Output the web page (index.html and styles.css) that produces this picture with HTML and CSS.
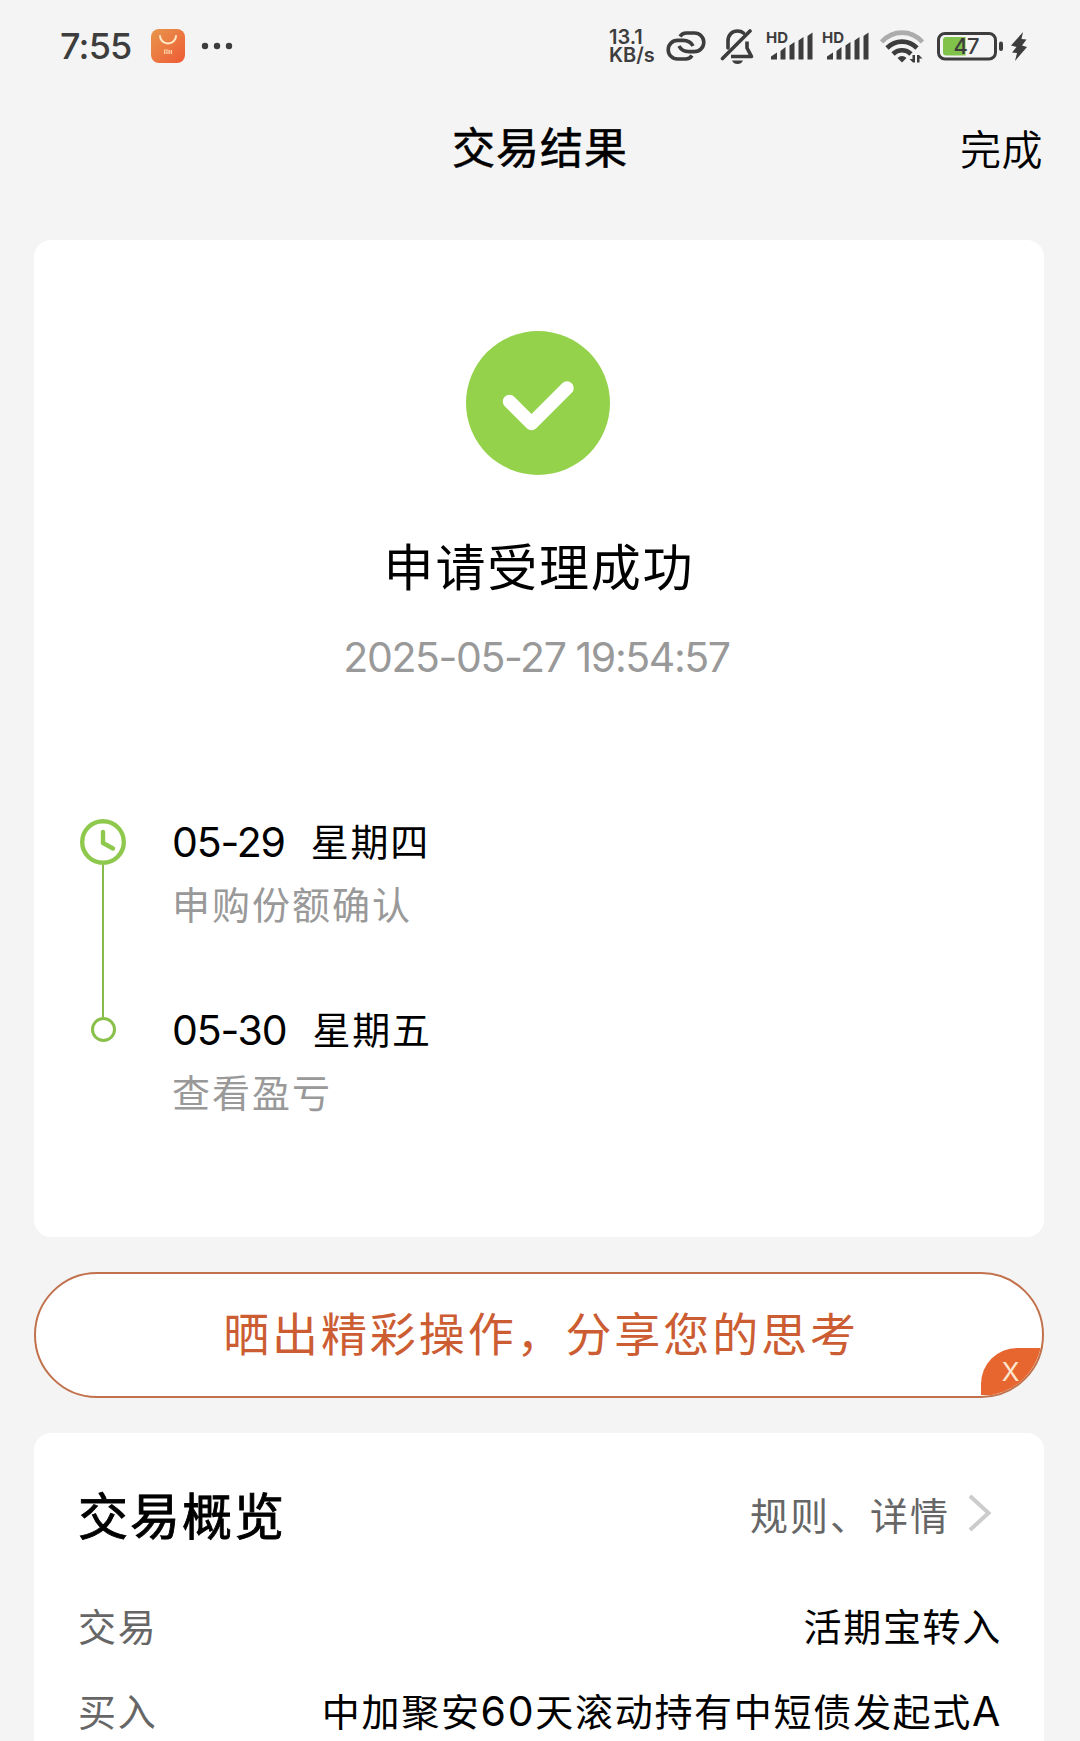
FILE: index.html
```html
<!DOCTYPE html>
<html lang="zh-CN">
<head>
  <meta charset="UTF-8" />
  <title>交易结果</title>
  <link rel="stylesheet" href="styles.css">
</head>
<body>
  <div class="statusbar">
    <span class="time">7:55</span>
    <svg class="app" width="34" height="34" viewBox="0 0 34 34">
      <defs>
        <linearGradient id="mi" x1="0" y1="0" x2="1" y2="1">
          <stop offset="0" stop-color="#e8974c" />
          <stop offset="1" stop-color="#ee5a35" />
        </linearGradient>
      </defs>
      <rect width="34" height="34" rx="8" fill="url(#mi)" />
      <path d="M9 7a8 7.5 0 0 0 16 0" fill="none" stroke="#ffe9c8" stroke-width="2" stroke-linecap="round" />
      <path d="M13.500 25v-4h3.500v4M15.300 25v-2.400M18.700 25v-4M20.500 25v-4" fill="none" stroke="#ffd0a8" stroke-width="1.100" />
    </svg>
    <svg class="dots" width="32" height="8" viewBox="0 0 32 8">
      <circle cx="4" cy="4" r="3.2" /><circle cx="16" cy="4" r="3.2" /><circle cx="28" cy="4" r="3.2" />
    </svg>
    <div class="speed"><span>13.1</span><span>KB/s</span></div>
    <svg class="link" width="40" height="30" viewBox="0 0 40 30">
      <g fill="none" stroke="#3d3d3d" stroke-width="3.600">
        <path d="M14 5.500C15.500 3 18 2 20.500 2H28.500a9.300 9.300 0 0 1 0 18.600H23c-4.500 0-8-1.600-10-5.600" />
        <path d="M26 24.500C24.500 27 22 28 19.500 28H11.500a9.300 9.300 0 0 1 0-18.600H17c4.500 0 8 1.600 10 5.600" />
      </g>
    </svg>
    <svg class="bell" width="35" height="37" viewBox="0 0 35 37">
      <g fill="none" stroke="#3d3d3d" stroke-width="3.600" stroke-linecap="round" stroke-linejoin="round">
        <path d="M2.500 30.500L30 3" />
        <path d="M8 20V13C8 7 12 3 17.500 3 20 3 22 3.600 23.500 5" />
        <path d="M27 13.500V20l4.500 8.500H11" stroke-linecap="butt" />
      </g>
      <path d="M12 32.500h11c-1 2.400-3 3.500-5.500 3.500S13 34.900 12 32.500z" fill="#3d3d3d" />
    </svg>
    <svg class="signal" width="48" height="36" viewBox="0 -6 48 36">
      <text x="0" y="11.500">HD</text>
      <path d="M5 28.500v-3l6-4v7zM14.500 28.500V20l5-4v12.500zM23.500 28.500v-14l5-3.500v17.500zM32.500 28.500V9.500l5-3.500v22.500zM41.500 28.500V5l5-3.500v27z" />
    </svg>
    <svg class="signal" width="48" height="36" viewBox="0 -6 48 36">
      <text x="0" y="11.500">HD</text>
      <path d="M5 28.500v-3l6-4v7zM14.500 28.500V20l5-4v12.500zM23.500 28.500v-14l5-3.500v17.500zM32.500 28.500V9.500l5-3.500v22.500zM41.500 28.500V5l5-3.500v27z" />
    </svg>
    <svg class="wifi" width="44" height="33" viewBox="0 0 44 33">
      <g fill="none" stroke="#3d3d3d" stroke-width="4.600">
        <path d="M1.500 12C13-.5 31-.5 42.500 12" stroke="#acacac" />
        <path d="M7 18c8.500-8.500 21.500-8.500 30 0" />
        <path d="M13 24c5-5 13-5 18 0" />
      </g>
      <path d="M17.500 28c2.500-2.800 6.500-2.800 9 0L22 32.500z" />
      <path d="M35 25v7.500h-2L29.500 29h3V25zM37 32.500V25h2l3.500 3.500h-3v4z" />
    </svg>
    <svg class="battery" width="66" height="30" viewBox="0 0 66 30">
      <rect x="1.500" y="2.500" width="57" height="25.500" rx="6.500" fill="none" stroke="#3d3d3d" stroke-width="3" />
      <path d="M9 6H28.500V24.500H9a3 3 0 0 1-3-3V9a3 3 0 0 1 3-3z" fill="#80c24a" />
      <text x="29" y="23.200" text-anchor="middle">47</text>
      <rect x="62" y="10.500" width="4" height="9.500" rx="2" />
    </svg>
    <svg class="bolt" width="18" height="30" viewBox="0 0 18 30">
      <path d="M13 1L1 14.500l5.500 1.500-4.500 5.500 5 .5L5 30 17 16l-5-1.500 4.500-6-5-.5z" />
    </svg>
  </div>

  <div class="navbar">
    <div class="nav-title">交易结果</div>
    <a class="nav-done">完成</a>
  </div>

  <div class="card result">
    <svg class="check" width="144" height="144" viewBox="0 0 144 144">
      <circle cx="72" cy="72" r="72" fill="#93d24a" />
      <path d="M43.500 70.500L65.500 92.500 101 57" fill="none" stroke="#fff" stroke-width="13.500" stroke-linecap="round" stroke-linejoin="round" />
    </svg>
    <h1>申请受理成功</h1>
    <div class="datetime">2025-05-27 19:54:57</div>

    <div class="timeline">
      <div class="rail">
        <svg width="46" height="46" viewBox="0 0 46 46">
          <circle cx="23" cy="23" r="20.800" />
          <path d="M23 13V24l10 5.500" stroke-linecap="round" stroke-linejoin="round" />
        </svg>
        <div class="line"></div>
        <div class="dot"></div>
      </div>
      <div class="steps">
        <div class="step">
          <div class="day"><span class="num">05-29</span><span class="week">星期四</span></div>
          <div class="desc">申购份额确认</div>
        </div>
        <div class="step">
          <div class="day"><span class="num">05-30</span><span class="week">星期五</span></div>
          <div class="desc">查看盈亏</div>
        </div>
      </div>
    </div>
  </div>

  <div class="share">
    <span>晒出精彩操作，分享您的思考</span>
    <div class="close">X</div>
  </div>

  <div class="card overview">
    <div class="overview-head">
      <h2>交易概览</h2>
      <a class="more">规则、详情
        <svg width="24" height="40" viewBox="0 0 24 40"><path d="M2 3L20.500 20 2 37" /></svg>
      </a>
    </div>
    <div class="row"><span class="label">交易</span><span class="value">活期宝转入</span></div>
    <div class="row"><span class="label">买入</span><span class="value">中加聚安<b>60</b>天滚动持有中短债发起式<b>A</b></span></div>
  </div>
</body>
</html>
```

FILE: styles.css
```css
* { box-sizing: border-box; }
body { margin: 0; height: 1741px; overflow: hidden; background: #f4f4f4; color: #000; font-family: "Noto Sans CJK SC", sans-serif; }
h1, h2 { margin: 0; }
svg { display: block; flex: none; }

/* status bar */
.statusbar { display: flex; align-items: center; height: 92px; padding-left: 60px; font-family: Inter, sans-serif; color: #3d3d3d; fill: #3d3d3d; }
.time { width: 91px; font-size: 36px; font-weight: 500; letter-spacing: -0.8px; }
.dots { margin-left: 16px; }
.speed { display: flex; flex-direction: column; width: 57px; margin-left: 376px; font-size: 20px; font-weight: 600; line-height: 18px; }
.bell { margin-left: 14px; }
.signal { margin-left: 11px; padding-bottom: 6px; height: 42px; }
.signal + .signal { margin-left: 8px; }
.signal text { font-size: 15px; font-weight: 700; }
.wifi { margin-left: 10px; }
.battery { margin-left: 13px; }
.battery text { font-size: 22px; font-weight: 500; letter-spacing: -1px; }
.bolt { margin-left: 7px; }

/* title */
.navbar { display: grid; grid-template-columns: 1fr auto 1fr; align-items: center; height: 106px; padding: 0 37px; }
.nav-title { grid-column: 2; font-size: 43px; letter-spacing: 1px; -webkit-text-stroke: 0.6px #000; }
.nav-done { justify-self: end; padding-top: 3px; font-size: 41px; font-weight: 350; letter-spacing: 0.5px; }

.card { width: 1010px; margin: 0 auto 0 34px; border-radius: 17px; background: #fff; }

/* result */
.result { display: flex; flex-direction: column; align-items: center; height: 997px; margin-top: 42px; padding-top: 91px; }
.check { margin-right: 2px; }
.result h1 { height: 70px; margin-top: 54px; font-size: 50px; font-weight: 400; letter-spacing: 1.8px; line-height: 70px; }
.datetime { height: 50px; margin-top: 33px; padding-right: 5px; color: #999; font: 400 41px/50px Inter, sans-serif; letter-spacing: -1.4px; }

.timeline { display: flex; width: 100%; margin-top: 137px; padding-left: 46px; }
.rail { display: flex; flex-direction: column; align-items: center; width: 46px; }
.rail svg { fill: none; stroke: #8ec94e; stroke-width: 4.400; }
.line { width: 2px; height: 152px; background: #88bb4e; }
.dot { width: 25px; height: 25px; border: 3px solid #88c04a; border-radius: 50%; }
.steps { margin-left: 46px; }
.step { height: 188px; }
.day { display: flex; align-items: center; gap: 26px; height: 46px; }
.num { font: 400 41px/46px Inter, sans-serif; letter-spacing: -1.2px; }
.week { height: 50px; font-size: 38px; letter-spacing: 1.8px; line-height: 46px; }
.desc { height: 46px; margin-top: 15px; color: #999; font-size: 38px; letter-spacing: 2px; line-height: 46px; }

/* share */
.share { position: relative; display: flex; align-items: center; justify-content: center; width: 1010px; height: 126px; margin: 35px 0 35px 34px; padding: 0 0 8px 4px; border: 2px solid #c1714b; border-radius: 63px; background: #fff; color: #cc5d33; font-size: 46px; letter-spacing: 2.900px; overflow: hidden; }
.close { position: absolute; right: 0; bottom: 1px; width: 61px; height: 47px; padding-right: 2px; border-radius: 36px 0 0 0; background: #e76630; color: #fde6cf; font: 400 26px/48px Inter, sans-serif; letter-spacing: 0; text-align: center; }

/* overview */
.overview { height: 340px; padding: 40px 42px 0 44px; }
.overview-head { display: flex; align-items: center; justify-content: space-between; height: 80px; margin-bottom: 29px; }
.overview h2 { font-size: 50px; font-weight: 400; letter-spacing: 2px; -webkit-text-stroke: 0.9px #000; }
.more { display: flex; align-items: center; gap: 18px; padding-right: 10px; color: #666; font-size: 38px; letter-spacing: 2px; }
.more svg { fill: none; stroke: #ccc; stroke-width: 4; }
.row { display: flex; align-items: center; justify-content: space-between; height: 85px; font-size: 38px; letter-spacing: 1.700px; white-space: nowrap; }
.label { color: #666; }
.row b { font-family: Inter, sans-serif; font-size: 41px; font-weight: 400; }
```
